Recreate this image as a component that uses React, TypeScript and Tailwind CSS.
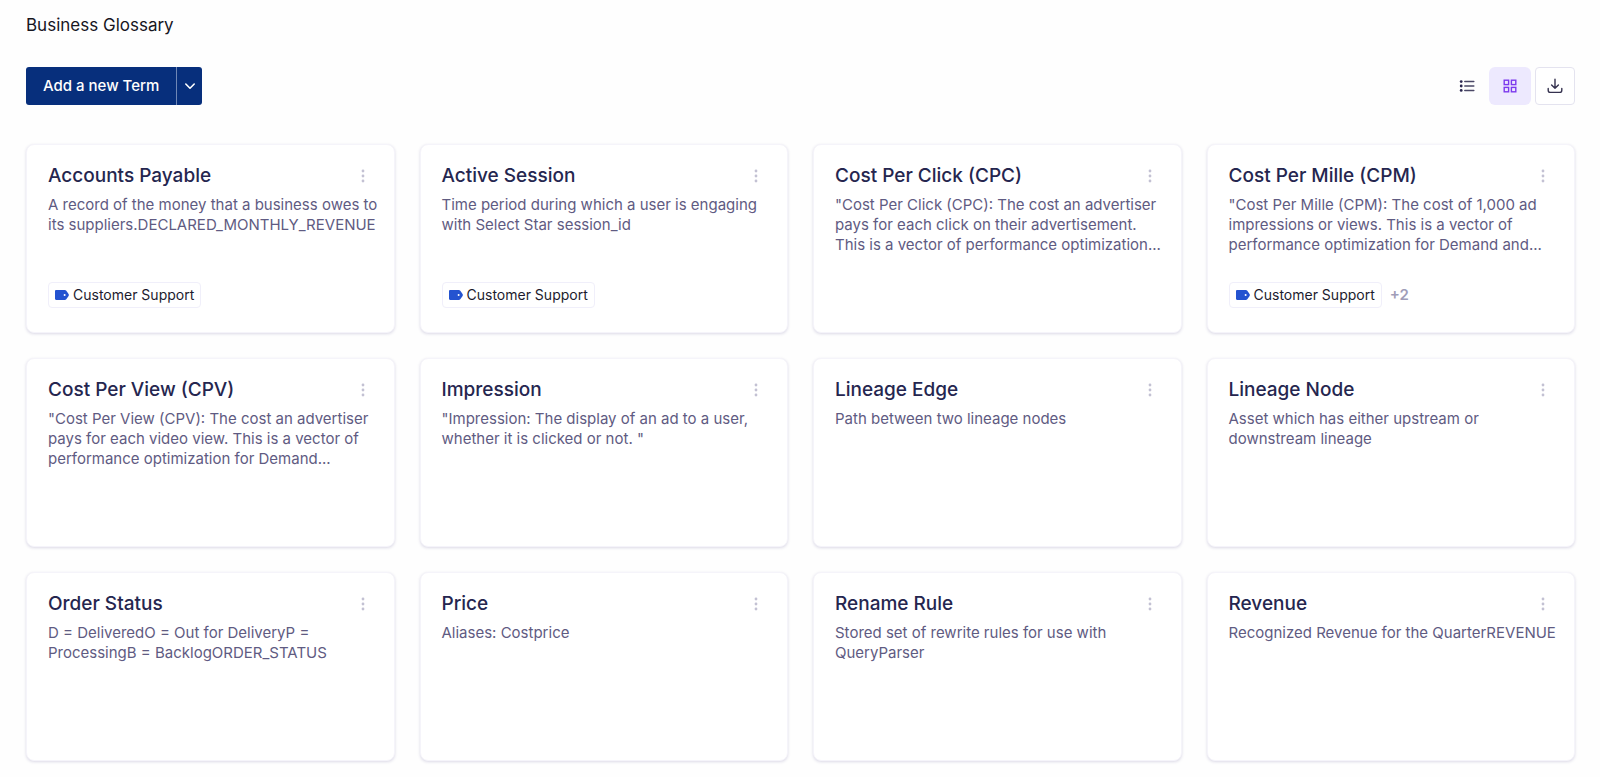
type Term = {
  name: string;
  description: string;
  tag?: string;
  more?: number;
};

const terms: Term[] = [
  {
    name: "Accounts Payable",
    description: "A record of the money that a business owes to its suppliers.DECLARED_MONTHLY_REVENUE",
    tag: "Customer Support",
  },
  {
    name: "Active Session",
    description: "Time period during which a user is engaging with Select Star session_id",
    tag: "Customer Support",
  },
  {
    name: "Cost Per Click (CPC)",
    description:
      '"Cost Per Click (CPC): The cost an advertiser pays for each click on their advertisement. This is a vector of performance optimization...',
  },
  {
    name: "Cost Per Mille (CPM)",
    description:
      '"Cost Per Mille (CPM): The cost of 1,000 ad impressions or views. This is a vector of performance optimization for Demand and...',
    tag: "Customer Support",
    more: 2,
  },
  {
    name: "Cost Per View (CPV)",
    description:
      '"Cost Per View (CPV): The cost an advertiser pays for each video view. This is a vector of performance optimization for Demand...',
  },
  {
    name: "Impression",
    description: '"Impression: The display of an ad to a user, whether it is clicked or not. "',
  },
  { name: "Lineage Edge", description: "Path between two lineage nodes" },
  { name: "Lineage Node", description: "Asset which has either upstream or downstream lineage" },
  {
    name: "Order Status",
    description: "D = DeliveredO = Out for DeliveryP = ProcessingB = BacklogORDER_STATUS",
  },
  { name: "Price", description: "Aliases: Costprice" },
  { name: "Rename Rule", description: "Stored set of rewrite rules for use with QueryParser" },
  { name: "Revenue", description: "Recognized Revenue for the QuarterREVENUE" },
];

function ChevronIcon() {
  return (
    <svg width="12" height="12" viewBox="0 0 12 12" fill="none" stroke="currentColor" strokeWidth="1.6" strokeLinecap="round" strokeLinejoin="round" aria-hidden="true">
      <path d="M1.8 4 6 8.2 10.2 4" />
    </svg>
  );
}

function ListIcon() {
  return (
    <svg width="16" height="16" viewBox="0 0 16 16" aria-hidden="true">
      <g fill="#2b2750">
        <circle cx="2.2" cy="3.6" r="1.4" />
        <circle cx="2.2" cy="8" r="1.4" />
        <circle cx="2.2" cy="12.4" r="1.4" />
      </g>
      <path d="M5.8 3.6h9M5.8 8h9M5.8 12.4h9" stroke="#4a4766" strokeWidth="1.5" strokeLinecap="round" />
    </svg>
  );
}

function GridIcon() {
  return (
    <svg width="16" height="16" viewBox="0 0 16 16" fill="none" stroke="#7c3aed" strokeWidth="1.4" aria-hidden="true">
      <rect x="2.2" y="2.2" width="4.4" height="4.4" />
      <rect x="9.4" y="2.2" width="4.4" height="4.4" />
      <rect x="2.2" y="9.4" width="4.4" height="4.4" />
      <rect x="9.4" y="9.4" width="4.4" height="4.4" />
    </svg>
  );
}

function DownloadIcon() {
  return (
    <svg width="16" height="16" viewBox="0 0 16 16" fill="none" stroke="#35324f" strokeWidth="1.4" strokeLinecap="round" strokeLinejoin="round" aria-hidden="true">
      <path d="M8 1.3v8.9M4.6 6.9 8 10.3l3.4-3.4" />
      <path d="M1.2 10.4v1.8c0 1.3.8 2.2 2.2 2.2h9.2c1.4 0 2.2-.9 2.2-2.2v-1.8" />
    </svg>
  );
}

function MoreIcon() {
  return (
    <svg width="4" height="14" viewBox="0 0 4 14" fill="#c3c1d3" aria-hidden="true">
      <circle cx="2" cy="2" r="1.4" />
      <circle cx="2" cy="7" r="1.4" />
      <circle cx="2" cy="12" r="1.4" />
    </svg>
  );
}

function TagIcon() {
  return (
    <svg width="14" height="10" viewBox="0 0 14 10" aria-hidden="true">
      <path d="M1.2 0h8.6c.6 0 1.1.2 1.5.7l2.3 3.4c.4.6.4 1.2 0 1.8l-2.3 3.4c-.4.5-.9.7-1.5.7H1.2C.5 10 0 9.5 0 8.8V1.2C0 .5.5 0 1.2 0Z" fill="#2453d0" />
      <circle cx="9.6" cy="5" r="1" fill="#fff" />
    </svg>
  );
}

function TermCard({ term }: { term: Term }) {
  return (
    <article className="flex min-h-[189px] flex-col rounded-lg border border-[#f5f4fa] bg-white pt-[17px] pr-3 pb-6 pl-[21px] shadow-[0_1px_3px_rgba(60,50,120,0.18)]">
      <div className="flex items-center justify-between pr-[9px]">
        <h2 className="text-[19px] leading-7 font-medium text-[#25264f]">{term.name}</h2>
        <button type="button" aria-label={`Options for ${term.name}`} className="flex h-6 w-5 items-center justify-center">
          <MoreIcon />
        </button>
      </div>
      <p className="pt-[5px] text-[15px] leading-5 text-[#5f5b82]">{term.description}</p>
      {term.tag && (
        <div className="mt-auto flex items-center gap-2">
          <a href="#customer-support" className="flex h-[26px] items-center gap-1 rounded border border-[#f0effa] px-[6px] text-sm text-[#1c1b2e]">
            <TagIcon />
            {term.tag}
          </a>
          {term.more && <span className="text-[15px] font-semibold text-[#a09db8]">+{term.more}</span>}
        </div>
      )}
    </article>
  );
}

export default function App() {
  return (
    <main className="min-h-screen bg-[#fefefe] pt-3 pr-[25px] pb-4 pl-[26px] font-['Inter',sans-serif]">
      <h1 className="text-[17px] leading-[26px] text-[#17161f]">Business Glossary</h1>

      <div className="mt-[29px] flex items-center justify-between">
        <div className="flex h-[38px] overflow-hidden rounded-[3px] bg-[#072f7c] text-white">
          <button type="button" className="px-[17px] text-[15px] font-medium">
            Add a new Term
          </button>
          <button type="button" aria-label="More ways to add a term" className="flex w-[26px] items-center justify-center border-l border-[#6f87b6]">
            <ChevronIcon />
          </button>
        </div>

        <div className="flex items-center gap-1">
          <button type="button" aria-label="List view" className="flex h-[38px] w-9 items-center justify-center">
            <ListIcon />
          </button>
          <button type="button" aria-label="Grid view" aria-pressed="true" className="flex h-[38px] w-[42px] items-center justify-center rounded-md bg-[#ede9fe]">
            <GridIcon />
          </button>
          <button type="button" aria-label="Download" className="flex h-[38px] w-10 items-center justify-center rounded border border-[#e4e3ef] bg-white">
            <DownloadIcon />
          </button>
        </div>
      </div>

      <section className="mt-[39px] grid grid-cols-4 gap-[25px]">
        {terms.map((term) => (
          <TermCard key={term.name} term={term} />
        ))}
      </section>
    </main>
  );
}
